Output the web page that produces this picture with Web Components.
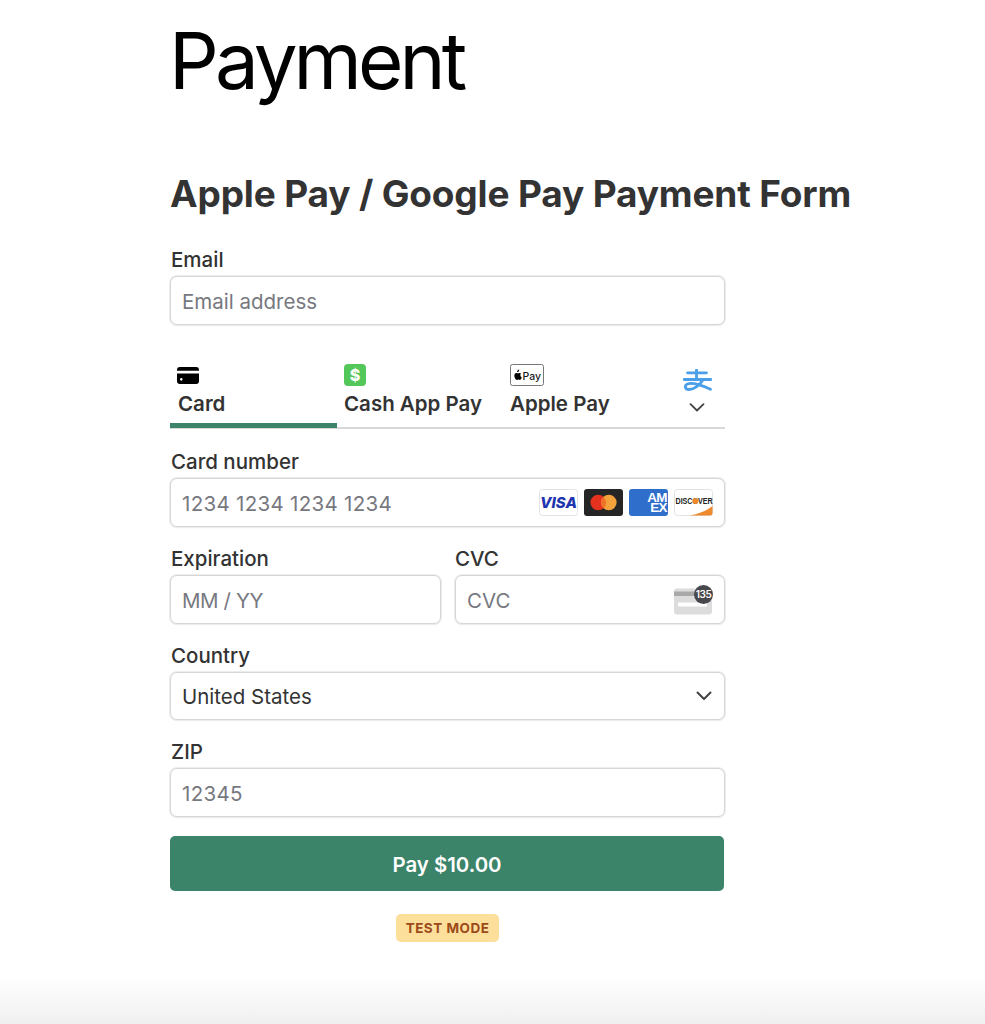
<!DOCTYPE html>
<html lang="en">
<head>
<meta charset="utf-8">
<title>Payment</title>
<style>
  html, body { margin: 0; padding: 0; }
  body { font-family: Inter, "Liberation Sans", sans-serif; color: #333; }
</style>
</head>
<body>
<pay-page>
  <h1 slot="title">Payment</h1>
  <h2 slot="subtitle">Apple Pay / Google Pay Payment Form</h2>
  <pay-form>
    <pay-field label="Email" placeholder="Email address"></pay-field>
    <pay-tabs>
      <pay-tab label="Card" active><svg slot="icon" width="22" height="17" viewBox="0 1 23 16" preserveAspectRatio="none" style="margin-left:-1px"><path fill="#000" fill-rule="evenodd" d="M3 1h17a3 3 0 0 1 3 3v.6H0V4a3 3 0 0 1 3-3zM0 7h23v7a3 3 0 0 1-3 3H3a3 3 0 0 1-3-3V7zm3.200 5.600a1.300 1.300 0 1 0 2.600 0 1.300 1.300 0 0 0-2.600 0z"/></svg></pay-tab>
      <pay-tab label="Cash App Pay"><svg slot="icon" width="22" height="22" viewBox="0 0 22 22"><rect width="22" height="22" rx="4" fill="#54c75a"/><text x="11" y="17" text-anchor="middle" font-family="Inter, sans-serif" font-weight="800" font-size="16" fill="#fff">$</text></svg></pay-tab>
      <pay-tab label="Apple Pay"><svg slot="icon" width="34" height="22" viewBox="0 0 34 22"><rect x=".5" y=".5" width="33" height="21" rx="2" fill="#fff" stroke="#777"/><path fill="#000" d="M8.600 7.400c.4-.5.7-1.100.6-1.800-.6 0-1.200.4-1.600.8-.3.400-.6 1.100-.5 1.700.6.100 1.200-.3 1.500-.7zm1.600 3.900c0-1 .8-1.500.9-1.600-.5-.7-1.200-.8-1.500-.8-.6-.1-1.300.4-1.600.4-.3 0-.9-.4-1.400-.4-.8 0-1.500.4-1.900 1.100-.8 1.400-.2 3.500.6 4.700.4.600.9 1.200 1.500 1.200.6 0 .8-.4 1.500-.4.700 0 .9.4 1.500.4.600 0 1-.6 1.400-1.200.4-.7.600-1.300.6-1.400-.1 0-1.300-.5-1.300-1.900z"/><text x="12.500" y="15.500" font-family="Inter, sans-serif" font-weight="500" font-size="10.500" fill="#1a1a1a">Pay</text></svg></pay-tab>
      <pay-more></pay-more>
    </pay-tabs>
    <pay-field label="Card number" placeholder="1234 1234 1234 1234" style="--ph-spacing:.3px"><card-brands slot="end"></card-brands></pay-field>
    <pay-row>
      <pay-field label="Expiration" placeholder="MM / YY" style="--ph-spacing:-.4px"></pay-field>
      <pay-field label="CVC" placeholder="CVC" style="--label-x:0"><cvc-icon slot="end"></cvc-icon></pay-field>
    </pay-row>
    <pay-field label="Country" value="United States" select></pay-field>
    <pay-field label="ZIP" placeholder="12345" style="--ph-spacing:.3px"></pay-field>
    <pay-button>Pay $10.00</pay-button>
    <test-badge>TEST MODE</test-badge>
  </pay-form>
</pay-page>

<script>
function define(name, css, html) {
  customElements.define(name, class extends HTMLElement {
    constructor() {
      super();
      this.attachShadow({ mode: 'open' });
    }
    connectedCallback() {
      const get = (k) => this.getAttribute(k) || '';
      this.shadowRoot.innerHTML = `<style>${css}</style>` + (typeof html === 'function' ? html(get, this) : html);
    }
  });
}

define('pay-page', `
  :host {
    display: block;
    box-sizing: border-box;
    height: 1024px;
    overflow: hidden;
    padding: 0 0 0 170px;
    background: linear-gradient(to bottom, #fff 0, #fff 978px, #f0f0f0 1024px);
  }
  ::slotted(h1) {
    margin: 0 0 0 -1px;
    font-size: 78px;
    line-height: 121px;
    font-weight: 420;
    letter-spacing: -3.9px;
    color: #000;
  }
  ::slotted(h2) {
    margin: 0;
    padding-top: 48px;
    font-size: 37px;
    line-height: 50px;
    font-weight: 700;
    letter-spacing: -.16px;
    color: #333;
    white-space: nowrap;
  }
`, `<slot name="title"></slot><slot name="subtitle"></slot><slot></slot>`);

define('pay-form', `
  :host { display: flex; flex-direction: column; width: 555px; margin-top: 29px; }
`, `<slot></slot>`);

define('pay-row', `
  :host { display: grid; grid-template-columns: 271px 270px; gap: 14px; }
`, `<slot></slot>`);

define('pay-field', `
  :host { display: block; margin-bottom: 20px; }
  label { display: block; height: 24px; margin: 0 0 4px var(--label-x, 1px); font-size: 20.5px; line-height: 24px; font-weight: 500; color: #333; }
  .box {
    box-sizing: border-box; height: 49px;
    display: flex; align-items: center; justify-content: space-between;
    padding: 0 11px;
    background: #fff;
    border: 1px solid #d6d6d6;
    border-radius: 7px;
    box-shadow: 0 0 0 1px #ececec, 0 1px 2px rgba(0,0,0,.06);
    font-size: 20.5px;
  }
  :host([select]) .box { height: 48px; padding-right: 12px; }
  .ph { color: #77787f; white-space: nowrap; letter-spacing: var(--ph-spacing, 0); padding-top: 2px; }
  .val { color: #333; white-space: nowrap; }
  svg { display: block; }
`, (get, el) => `
  <label>${get('label')}</label>
  <div class="box">
    ${el.hasAttribute('value') ? `<span class="val">${get('value')}</span>` : `<span class="ph">${get('placeholder')}</span>`}
    ${el.hasAttribute('select') ? `<svg width="16" height="10" viewBox="0 0 16 10"><path d="M1.500 1.500 8 8l6.500-6.500" fill="none" stroke="#444" stroke-width="2" stroke-linecap="round" stroke-linejoin="round"/></svg>` : ''}
    <slot name="end"></slot>
  </div>
`);

define('pay-tabs', `
  :host {
    display: grid; grid-template-columns: 167px 166px 166px 56px;
    height: 83px; margin: -1px 0 21px;
    border-bottom: 2px solid #d9d9d9;
  }
`, `<slot></slot>`);

define('pay-tab', `
  :host {
    display: flex; flex-direction: column; justify-content: flex-end;
    box-sizing: border-box; height: 83px; padding: 0 0 11px 7px;
    font-size: 20.5px; font-weight: 600; color: #333;
  }
  :host([active]) { padding-left: 8px; height: 84px; padding-bottom: 12px; box-shadow: inset 0 -5px #3c8469; }
  .icon { height: 22px; display: flex; align-items: center; margin-bottom: 6px; }
  span { line-height: 24px; white-space: nowrap; }
`, (get) => `<div class="icon"><slot name="icon"></slot></div><span>${get('label')}</span>`);

define('pay-more', `
  :host { display: flex; flex-direction: column; align-items: center; justify-content: flex-end; height: 83px; padding: 0 0 15px; box-sizing: border-box; gap: 12px; }
  svg { display: block; }
`, `
  <svg width="29" height="22" viewBox="0 0 29 22" fill="none" stroke="#4a9fe8" stroke-width="2.800" stroke-linecap="round"><path d="M4.500 3.800h19M13.500 .8V10.500M1.200 10.500h26.600M20 10.800C17 16 11 20.500 6 20.500 2 20.500 1 16.500 4.500 15 10 13 19 16.500 27.500 20.300"/></svg>
  <svg width="16" height="9" viewBox="0 0 16 9"><path d="M1.500 1.200 8 7.500l6.500-6.300" fill="none" stroke="#444" stroke-width="1.800" stroke-linecap="round" stroke-linejoin="round"/></svg>
`);

define('card-brands', `
  :host { display: flex; gap: 6px; }
  svg { display: block; }
  text { font-family: "Liberation Sans", sans-serif; }
  .amex {
    box-sizing: border-box; width: 39px; height: 27px; padding: 4px 1px 0 0; overflow: hidden;
    background: #2f6fcb; border-radius: 3px;
    color: #fff; font: 700 13.500px/10px "Liberation Sans", sans-serif; letter-spacing: -.6px;
    text-align: right; white-space: pre-line;
  }
`, `
  <svg width="39" height="27" viewBox="0 0 39 27"><rect x=".5" y=".5" width="38" height="26" rx="3" fill="#fff" stroke="#e3e3e3"/><text x="19.500" y="19" text-anchor="middle" font-size="15" font-weight="800" font-style="italic" fill="#1f35b0" style="font-family:Inter,sans-serif">VISA</text></svg>
  <svg width="39" height="27" viewBox="0 0 39 27"><rect width="39" height="27" rx="3" fill="#252525"/><circle cx="14.200" cy="13.500" r="7.800" fill="#e5321f"/><circle cx="24.800" cy="13.500" r="7.800" fill="#f3a13b"/><path d="M19.500 7.800a7.800 7.800 0 0 1 0 11.400 7.800 7.800 0 0 1 0-11.400z" fill="#f0702a"/></svg>
  <div class="amex">AM
EX</div>
  <svg width="39" height="27" viewBox="0 0 39 27"><rect x=".5" y=".5" width="38" height="26" rx="3" fill="#fff" stroke="#e3e3e3"/><path d="M16 26.500c9-1.500 17-5 22.500-9.500v7a2.500 2.500 0 0 1-2.500 2.500z" fill="#ee8a2e"/><text transform="translate(1.500 15) scale(.84 1)" font-size="8.500" font-weight="700" fill="#222">DISCOVER</text><circle cx="21.500" cy="12" r="3" fill="#ee8a2e"/></svg>
`);

define('cvc-icon', `
  :host { display: block; }
  svg { display: block; }
`, `
  <svg width="39" height="30" viewBox="0 0 39 30"><rect x="0" y="3.500" width="38" height="26" rx="3" fill="#dcdcdc"/><rect x="0" y="6.500" width="38" height="4.500" fill="#a9a9a9"/><rect x="4" y="17.500" width="29" height="4" rx="1" fill="#fff"/><circle cx="29.500" cy="9.500" r="9.500" fill="#48484c"/><text x="29.500" y="13.200" text-anchor="middle" font-family="Inter, sans-serif" font-size="10" font-weight="600" fill="#fff" letter-spacing="-.4">135</text></svg>
`);

define('pay-button', `
  :host {
    display: flex; align-items: center; justify-content: center;
    box-sizing: border-box; height: 55px; padding-top: 1px; margin-top: -1px; margin-right: 1px;
    background: #3c8469; border-radius: 5px;
    color: #fff; font-size: 20.4px; font-weight: 600;
  }
`, `<slot></slot>`);

define('test-badge', `
  :host {
    display: block; align-self: center;
    margin-top: 23px;
    box-sizing: border-box; height: 28px; padding: 0 10px;
    background: #fbdf9b; border-radius: 5px;
    color: #9c4a1a; font-size: 13.500px; font-weight: 700; line-height: 28px; letter-spacing: .5px;
  }
`, `<slot></slot>`);
</script>
</body>
</html>
